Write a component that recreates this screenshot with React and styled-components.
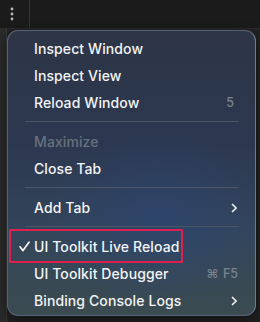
import React from 'react';
import styled, { createGlobalStyle } from 'styled-components';

const GlobalStyle = createGlobalStyle`
  html, body {
    margin: 0;
    padding: 0;
    background: #1c1c1c;
  }
  body {
    font-family: Inter, "Noto Sans", "DejaVu Sans", sans-serif;
    -webkit-font-smoothing: antialiased;
  }
`;

const menu = [
  { label: 'Inspect Window' },
  { label: 'Inspect View' },
  { label: 'Reload Window', shortcut: '5', inset: true },
  { separator: true },
  { label: 'Maximize', disabled: true },
  { label: 'Close Tab' },
  { separator: true },
  { label: 'Add Tab', submenu: true },
  { separator: true },
  { label: 'UI Toolkit Live Reload', checked: true, highlighted: true },
  { label: 'UI Toolkit Debugger', shortcut: '⌘ F5' },
  { label: 'Binding Console Logs', submenu: true },
];

export default function App() {
  return (
    <Page>
      <GlobalStyle />
      <TopBar>
        <DotsCell>
          <svg width="4" height="14" viewBox="0 0 4 14">
            <circle cx="2" cy="2" r="1.4" fill="#b8b8b8" />
            <circle cx="2" cy="7" r="1.4" fill="#b8b8b8" />
            <circle cx="2" cy="12" r="1.4" fill="#b8b8b8" />
          </svg>
        </DotsCell>
      </TopBar>
      <Body>
        <LeftStrip />
      </Body>

      <Menu>
        {menu.map((item, i) =>
          item.separator ? (
            <Separator key={i} />
          ) : (
            <Item key={i} $disabled={item.disabled} $highlighted={item.highlighted}>
              <Check>
                {item.checked && (
                  <svg width="11" height="11" viewBox="0 0 11 11">
                    <polyline
                      points="1,5.8 4,9.6 10,1.2"
                      fill="none"
                      stroke="#f2f4f6"
                      strokeWidth="1.7"
                      strokeLinecap="round"
                      strokeLinejoin="round"
                    />
                  </svg>
                )}
              </Check>
              <Label>{item.label}</Label>
              {item.shortcut && <Shortcut $inset={item.inset}>{item.shortcut}</Shortcut>}
              {item.submenu && (
                <Chevron>
                  <svg width="7" height="10" viewBox="0 0 7 10">
                    <polyline
                      points="1.5,1.5 5.2,5 1.5,8.5"
                      fill="none"
                      stroke="#eef0f2"
                      strokeWidth="1.7"
                      strokeLinecap="round"
                      strokeLinejoin="round"
                    />
                  </svg>
                </Chevron>
              )}
            </Item>
          )
        )}
      </Menu>
    </Page>
  );
}

const Page = styled.div`
  position: relative;
  width: 260px;
  height: 322px;
  overflow: hidden;
  display: flex;
  flex-direction: column;
  background: #1c1c1c;
`;

const TopBar = styled.div`
  height: 28px;
  display: flex;
  background: #1b1b1b;
  border-bottom: 1px solid #2c2c2c;
`;

const DotsCell = styled.div`
  width: 30px;
  display: flex;
  align-items: center;
  justify-content: center;
  padding-right: 5px;
  box-sizing: border-box;
  border-right: 1px solid #333;
`;

const Body = styled.div`
  flex: 1;
  display: flex;
  background: #222;
`;

const LeftStrip = styled.div`
  width: 6px;
  background: #2b2b2b;
  border-right: 1px solid #3a3a3a;
`;

const Menu = styled.div`
  position: absolute;
  left: 7px;
  top: 30px;
  width: 249px;
  height: 286px;
  box-sizing: border-box;
  padding: 4px 0 0;
  border-radius: 11px;
  border: 1px solid #56637a;
  border-right-color: #6a7b8e;
  background:
    radial-gradient(ellipse 110px 90px at 150px 190px, rgba(40, 70, 130, 0.45), transparent),
    linear-gradient(180deg, #2d3546 0%, #2c3850 40%, #33455a 70%, #3b4b50 100%);
  box-shadow: 0 4px 14px rgba(0, 0, 0, 0.5);
  display: flex;
  flex-direction: column;
`;

const Item = styled.div`
  position: relative;
  height: 27px;
  display: flex;
  align-items: center;
  padding: 0 17px 0 11px;
  color: ${p => (p.$disabled ? '#68717e' : '#f3f4f6')};
  font-size: 14px;
  font-weight: 500;

  ${p =>
    p.$highlighted &&
    `
    &::after {
      content: '';
      position: absolute;
      left: 1px;
      top: -4px;
      width: 174px;
      height: 34px;
      box-sizing: border-box;
      border: 2px solid #dc2150;
      border-radius: 1px;
    }
  `}
`;

const Check = styled.span`
  width: 15px;
  display: flex;
  align-items: center;
`;

const Label = styled.span`
  flex: 1;
  letter-spacing: 0.1px;
`;

const Shortcut = styled.span`
  color: #7a8390;
  font-size: 12.5px;
  font-weight: 500;
  word-spacing: 1px;
  margin-right: ${p => (p.$inset ? '4px' : '0')};
`;

const Chevron = styled.span`
  display: flex;
  align-items: center;
`;

const Separator = styled.div`
  height: 1px;
  margin: 5px 16px 6px 17px;
  background: #4b5669;
`;
